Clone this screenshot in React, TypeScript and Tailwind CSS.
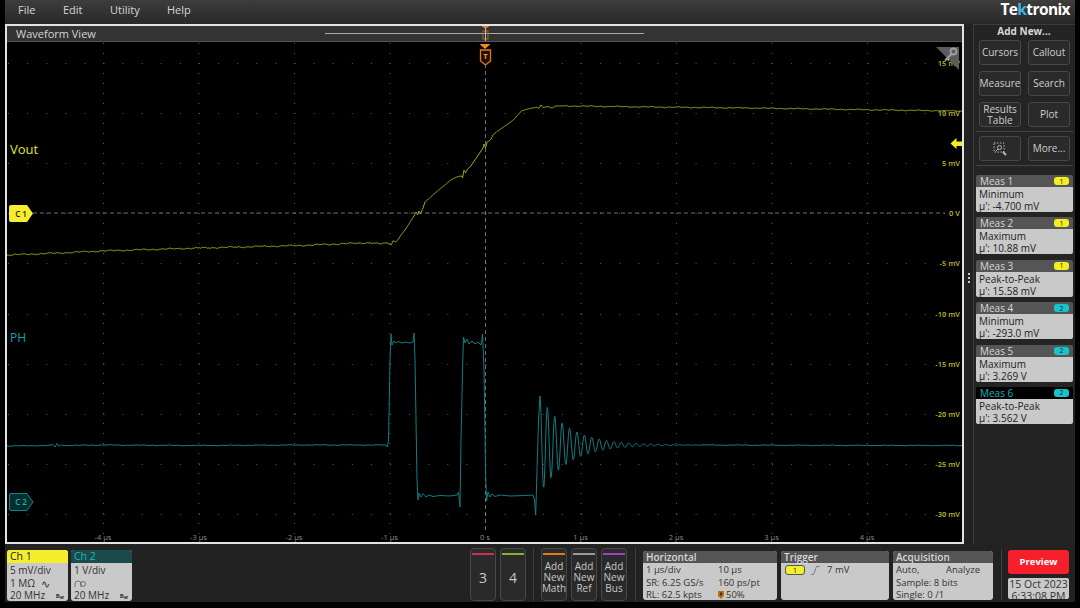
import React from "react";

const F = { fontFamily: '"Open Sans","Liberation Sans",sans-serif' };

function interp(pts: number[][], step = 0.7) {
  const out: number[][] = [];
  for (let i = 0; i < pts.length - 1; i++) {
    const [x0, y0] = pts[i];
    const [x1, y1] = pts[i + 1];
    const n = Math.max(1, Math.round((x1 - x0) / step));
    for (let k = 0; k < n; k++) out.push([x0 + ((x1 - x0) * k) / n, y0 + ((y1 - y0) * k) / n]);
  }
  out.push(pts[pts.length - 1]);
  return out;
}
const noise = (x: number, a: number) =>
  a * (Math.sin(x * 0.73) * 0.5 + Math.sin(x * 1.91 + 1.3) * 0.35 + Math.sin(x * 0.21 + 0.4) * 0.5);
const toPath = (p: number[][]) => "M" + p.map(([x, y]) => `${x.toFixed(1)} ${y.toFixed(1)}`).join("L");

const yellowPts = [
  [7, 255], [60, 253], [100, 251], [150, 249.5], [200, 248], [300, 245.5], [370, 242.7], [380, 244], [388, 243], [391, 244.5], [393, 241], [396, 241.5],
  [405, 230], [414, 216], [416, 212], [417.5, 215], [419, 211], [420.5, 214], [423, 208], [425, 202], [436.7, 191.7], [451.7, 179.3], [458, 176.5], [461.7, 176],
  [462.5, 178], [464, 170], [465.5, 173], [467.5, 169], [470, 167], [477, 157], [483, 148], [484, 144], [485.5, 148], [487, 142], [489, 141], [491, 139], [493, 135], [496.7, 131.7], [505, 126], [513.3, 120],
  [521.7, 110.7], [530, 108.5], [536.7, 107.3], [539, 108.5], [541, 105], [543, 107.5], [548, 106.5], [552, 108], [556, 106], [570, 106],
  [650, 107], [750, 108], [850, 109.5], [920, 110.5], [962, 111],
];
const yellowBase = interp(yellowPts).map(([x, y]) => [x, y + noise(x, x < 400 ? 0.7 : x > 560 ? 0.5 : 0)]);

const cyanPts = [
  [7, 446], [50, 445.5], [53, 444.5], [55, 447], [57, 443.5], [59, 446.5], [61, 444.5], [64, 445.5], [100, 445], [200, 445.5], [300, 445], [380, 445], [386, 445], [387.5, 447], [388.5, 440],
  [390, 360], [391, 334], [392, 345], [394, 341], [396, 343], [398, 341.5], [402, 343], [406, 342], [410, 343], [413, 342], [414, 333], [415, 360],
  [417, 480], [418, 500], [419, 493], [421, 497], [423, 493.5], [426, 497], [429, 495], [433, 496.5], [440, 495.5], [450, 496], [457, 495], [458.5, 492], [460, 507],
  [461, 440], [462.5, 370], [463.5, 337], [465, 343], [467, 339], [469, 344], [472, 341], [475, 344], [478, 342], [481, 345], [482.5, 334], [484, 370],
  [485.5, 470], [486.5, 501], [488, 492], [490, 497], [492, 494], [495, 496.5], [500, 495], [510, 496], [525, 495.5], [533, 495], [534.5, 500], [535.7, 515],
  [537, 470], [538.5, 420], [540, 396],
];
const ringing: number[][] = [];
for (let x = 540.4; x < 700; x += 0.5) {
  ringing.push([x, 445 - 49 * Math.exp(-(x - 540) / 28) * Math.cos((2 * Math.PI * (x - 540)) / 7.4)]);
}
const cyanTail = interp([[700, 445], [800, 445.3], [962, 445.5]], 1);
const cyanData = [
  ...interp(cyanPts, 1).map(([x, y]) => [x, y + (x < 380 ? noise(x, 0.35) : 0)]),
  ...ringing,
  ...cyanTail.map(([x, y]) => [x, y + noise(x, 0.35)]),
];

const xs = [103, 198.5, 294, 389.5, 485, 580.5, 676, 771.5, 867];
const ys = [63, 113, 163, 213, 263, 314, 364, 414, 464, 514];
const yLabels = ["15 mV", "10 mV", "5 mV", "0 V", "-5 mV", "-10 mV", "-15 mV", "-20 mV", "-25 mV", "-30 mV"];
const xLabels = ["-4 µs", "-3 µs", "-2 µs", "-1 µs", "0 s", "1 µs", "2 µs", "3 µs", "4 µs"];

function Plot() {
  const dots: React.ReactNode[] = [];
  for (const y of ys) {
    for (let x = 8; x < 962; x += 19.1) dots.push(<rect key={`h${y}-${x}`} x={x} y={y} width="1" height="1" fill="#5a5a5a" />);
  }
  for (const x of xs) {
    if (x === 485) continue;
    for (let y = 43; y < 542; y += 10) dots.push(<rect key={`v${x}-${y}`} x={x} y={y} width="1" height="1" fill="#5a5a5a" />);
  }
  return (
    <div className="relative h-[500px] bg-black overflow-hidden">
      <svg className="block" width="955" height="500" viewBox="7 42 955 500" style={F}>
        {dots}
        <line x1="33" y1="213" x2="945" y2="213" stroke="#8c8c8c" strokeWidth="0.8" strokeDasharray="4 3" />
        <line x1="485.500" y1="64" x2="485.500" y2="530" stroke="#8c8c8c" strokeWidth="0.8" strokeDasharray="4 3" />
        <path d={toPath(yellowBase)} fill="none" stroke="#a6a61a" strokeWidth="1" />
        <path d={toPath(cyanData)} fill="none" stroke="#0f7f85" strokeWidth="1" />
        {ys.map((y, i) => (
          <text key={y} x="960" y={y + 3} textAnchor="end" fontSize="7.5" fontWeight="600" fill="#bcbc26">{yLabels[i]}</text>
        ))}
        {xs.map((x, i) => (
          <text key={x} x={x} y="540" textAnchor="middle" fontSize="7.5" fill="#8e8e8e">{xLabels[i]}</text>
        ))}
        <text x="10" y="154" fontSize="13" fill="#e6e02c">Vout</text>
        <text x="10" y="342" fontSize="12" fill="#12a6ac">PH</text>
        <path d="M11 205h16l6 8.5-6 8.5H11a2 2 0 0 1-2-2V207a2 2 0 0 1 2-2z" fill="#f4ee2e" />
        <text x="21" y="216.500" textAnchor="middle" fontSize="8" fontWeight="600" fill="#222">C 1</text>
        <path d="M11 493.500h16l6 8.500-6 8.500H11a1.500 1.500 0 0 1-1.500-1.500V495a1.500 1.500 0 0 1 1.500-1.500z" fill="#072f30" stroke="#15a0a6" strokeWidth="0.8" />
        <text x="21" y="505" textAnchor="middle" fontSize="8" fontWeight="600" fill="#19b3b9">C 2</text>
        <path d="M936 47h23v23z" fill="#5c5c5c" />
        <g stroke="#a0a0a0" fill="none" strokeWidth="1.800">
          <circle cx="953.500" cy="51.500" r="3" />
          <path d="M951.500 54l-6.500 6.500M947 58.500l2 2" />
        </g>
        <path d="M950.500 143.500l6-5.500v3.500h5.500v4.500h-5.500v3z" fill="#f2ee20" />
        <path d="M479.500 44h11l-5.500 5z" fill="#f08a1e" />
        <path d="M480.500 50h10v11l-5 4-5-4z" fill="#1c0e02" stroke="#e07c16" strokeWidth="1.300" />
        <text x="485.500" y="59" textAnchor="middle" fontSize="7.500" fontWeight="700" fill="#f09a3a">T</text>
      </svg>
    </div>
  );
}

function Btn({ children, h, w = "w-[42px]" }: { children: React.ReactNode; h: string; w?: string }) {
  return (
    <div className={`${w} ${h} flex items-center justify-center text-center leading-[11px] text-[10px] text-[#cfcfcf] bg-[#2a2a2a] border border-[#474747] rounded-[3px]`}>
      {children}
    </div>
  );
}

function Meas({ n, kind, value, ch, active }: { n: number; kind: string; value: string; ch: 1 | 2; active?: boolean }) {
  return (
    <div className="w-[97px] h-[37px] rounded-[2px] overflow-hidden flex flex-col">
      <div className={`h-[13px] flex items-center justify-between px-[4px] ${active ? "bg-black" : "bg-[#555555]"}`}>
        <span className={`text-[10px] leading-[12px] ${active ? "text-[#12b5bb]" : "text-[#d8d8d8]"}`}>Meas {n}</span>
        <span className={`w-[15px] h-[8px] rounded-[3px] flex items-center justify-center text-[7px] leading-none text-[#222] ${ch === 1 ? "bg-[#f2ee20]" : "bg-[#16c4cb]"}`}>{ch}</span>
      </div>
      <div className="flex-1 bg-[#c9c9c9] px-[3px] text-[10px] leading-[12px] text-[#222] pt-px">
        <div>{kind}</div>
        <div>µ': {value}</div>
      </div>
    </div>
  );
}

function Chan({ title, l1, l2, wave, active }: { title: string; l1: string; l2: string; wave: React.ReactNode; active?: boolean }) {
  return (
    <div className="w-[61px] h-[51px] rounded-[3px] overflow-hidden flex flex-col bg-[#c9c9c9]">
      <div className={`h-[13px] px-[3px] text-[10.500px] leading-[13px] ${active ? "bg-[#f4ee2e] text-[#222]" : "bg-[#1b4a4a] text-[#16b9c0]"}`}>{title}</div>
      <div className="px-[3px] text-[10px] leading-[12.700px] text-[#333] pt-[1px]">
        <div>{l1}</div>
        <div className="flex items-center gap-[4px] h-[12.700px]">{l2 && <span>{l2}</span>}{wave}</div>
        <div className="flex items-center justify-between">
          <span>20 MHz</span>
          <span className="text-[6px] font-bold leading-none pr-[1px]">B<sub className="text-[5px]">w</sub></span>
        </div>
      </div>
    </div>
  );
}

function TallBtn({ bar, children, big }: { bar: string; children: React.ReactNode; big?: boolean }) {
  return (
    <div className={`w-[26px] h-[53px] shrink-0 flex flex-col items-center bg-[#2a2a2a] border border-[#474747] rounded-[4px] pt-[4px]`}>
      <div className={`w-[22px] h-[2px] ${bar}`} />
      <div className={`flex-1 flex items-center justify-center text-center text-[#c8c8c8] ${big ? "text-[14px]" : "text-[10px] leading-[11px]"}`}>{children}</div>
    </div>
  );
}

function Info({ title, w, children }: { title: string; w: string; children: React.ReactNode }) {
  return (
    <div className={`${w} h-[49px] shrink-0 rounded-[3px] overflow-hidden flex flex-col bg-[#c9c9c9]`}>
      <div className="h-[12px] bg-[#555555] px-[3px] text-[10px] font-semibold leading-[12px] text-[#d8d8d8]">{title}</div>
      <div className="flex-1 px-[3px] pt-px text-[9.500px] leading-[12.500px] text-[#333]">{children}</div>
    </div>
  );
}

export default function App() {
  return (
    <div className="w-[1080px] h-[608px] bg-black flex flex-col pl-[5px] pr-[5px] pb-[6px] overflow-hidden" style={F}>
      <header className="h-[24px] shrink-0 flex items-center justify-between bg-gradient-to-b from-[#3d3d3d] to-[#282828] pr-[5px]">
        <nav className="flex text-[11px] leading-[14px] text-[#d6d6d6] pl-[13px] pb-[4px]">
          <span className="w-[45px]">File</span>
          <span className="w-[47px]">Edit</span>
          <span className="w-[57px]">Utility</span>
          <span>Help</span>
        </nav>
        <span className="text-[15.500px] leading-[16px] font-bold text-white tracking-[-0.6px] pb-[6px]">Te<span className="text-[#3fb6e8]">k</span>tronix</span>
      </header>

      <main className="h-[520px] shrink-0 flex bg-[#222222]">
        <section className="w-[959px] shrink-0 border-2 border-[#e2e2e2] flex flex-col">
          <div className="h-[16px] shrink-0 bg-[#333333] border-b border-[#555] flex items-center pl-[9px] relative">
            <span className="text-[11px] leading-none text-[#d6d6d6]">Waveform View</span>
            <div className="absolute left-[318px] top-[7px] w-[319px] h-[1px] bg-[#a9a9a9]" />
            <svg className="absolute left-[473px] top-0" width="11" height="15" viewBox="0 0 11 15">
              <path d="M1.500 0h8l-4 3z" fill="#d9822b" />
              <rect x="3" y="5" width="5" height="8" fill="none" stroke="#a8662a" strokeWidth="1" />
              <line x1="5.500" y1="2" x2="5.500" y2="15" stroke="#bbb" strokeWidth="1" />
            </svg>
          </div>
          <Plot />
        </section>

        <div className="w-[9px] shrink-0 flex flex-col items-center justify-center gap-[2px] pb-[12px] pl-[1px]">
          <i className="w-[2px] h-[2px] bg-[#ccc]" />
          <i className="w-[2px] h-[2px] bg-[#ccc]" />
          <i className="w-[2px] h-[2px] bg-[#ccc]" />
        </div>

        <aside className="flex-1 border-l border-t border-[#3c3c3c] bg-[#242424] flex flex-col pl-[2px]">
          <div className="text-[10px] font-bold text-[#d8d8d8] text-center leading-[12px] h-[12px] pr-[3px]">Add New...</div>
          <div className="grid grid-cols-[42px_42px] gap-x-[7px] gap-y-[6px] pl-[3px] pt-[3px]">
            <Btn h="h-[25px]">Cursors</Btn>
            <Btn h="h-[25px]">Callout</Btn>
            <Btn h="h-[25px]">Measure</Btn>
            <Btn h="h-[25px]">Search</Btn>
            <Btn h="h-[25px]">Results<br />Table</Btn>
            <Btn h="h-[25px]">Plot</Btn>
          </div>
          <div className="h-px bg-[#444] mt-[4px] mr-[2px]" />
          <div className="grid grid-cols-[42px_42px] gap-x-[7px] pl-[3px] mt-[4px]">
            <Btn h="h-[25px]">
              <svg width="14" height="14" viewBox="0 0 14 14" fill="none" stroke="#b5b5b5" strokeWidth="1">
                <rect x="1" y="1" width="10" height="9" strokeDasharray="1.500 1.500" />
                <circle cx="6.500" cy="5.500" r="2" />
                <path d="M5 7l-2 2" />
                <path d="M10 10l3 3" strokeWidth="2" />
              </svg>
            </Btn>
            <Btn h="h-[25px]">More...</Btn>
          </div>
          <div className="h-px bg-[#444] mt-[4px] mr-[2px]" />
          <div className="flex flex-col gap-[5.400px] mt-[9px]">
            <Meas n={1} kind="Minimum" value="-4.700 mV" ch={1} />
            <Meas n={2} kind="Maximum" value="10.88 mV" ch={1} />
            <Meas n={3} kind="Peak-to-Peak" value="15.58 mV" ch={1} />
            <Meas n={4} kind="Minimum" value="-293.0 mV" ch={2} />
            <Meas n={5} kind="Maximum" value="3.269 V" ch={2} />
            <Meas n={6} kind="Peak-to-Peak" value="3.562 V" ch={2} active />
          </div>
        </aside>
      </main>

      <footer className="flex-1 flex items-start bg-[#222222] pl-[2px] pt-[6px]">
        <div className="flex gap-[3px]">
          <Chan title="Ch 1" l1="5 mV/div" l2="1 MΩ" active wave={<span className="text-[11px] leading-none pl-[2px]">∿</span>} />
          <Chan title="Ch 2" l1="1 V/div" l2="" wave={
            <svg width="12" height="9" viewBox="0 0 12 9" fill="none" stroke="#666" strokeWidth="0.900">
              <path d="M1 8V5a3 3 0 0 1 6 0v3" />
              <circle cx="9" cy="5" r="2.500" />
            </svg>
          } />
        </div>
        <div className="ml-[338px] -mt-[2px] flex items-start">
          <div className="flex gap-[4px]">
            <TallBtn bar="bg-[#c8324a]" big>3</TallBtn>
            <TallBtn bar="bg-[#7fb62c]" big>4</TallBtn>
          </div>
          <div className="w-px h-[53px] bg-[#3f3f3f] mx-[7px]" />
          <div className="flex gap-[4px]">
            <TallBtn bar="bg-[#e07c16]">Add<br />New<br />Math</TallBtn>
            <TallBtn bar="bg-[#9a9a9a]">Add<br />New<br />Ref</TallBtn>
            <TallBtn bar="bg-[#a040c8]">Add<br />New<br />Bus</TallBtn>
          </div>
          <div className="w-px h-[53px] bg-[#3f3f3f] mx-[7.500px]" />
        </div>
        <div className="flex gap-[4px] mt-px">
          <Info title="Horizontal" w="w-[134px]">
            <div className="grid grid-cols-[72px_1fr]">
              <span>1 µs/div</span><span>10 µs</span>
              <span>SR: 6.25 GS/s</span><span>160 ps/pt</span>
              <span>RL: 62.5 kpts</span>
              <span className="flex items-center gap-[2px]">
                <svg width="6" height="8" viewBox="0 0 6 8"><path d="M0 0h6v5l-3 3-3-3z" fill="#c8680c" /><rect x="2" y="1.500" width="2" height="3" fill="#333" /></svg>
                50%
              </span>
            </div>
          </Info>
          <Info title="Trigger" w="w-[108px]">
            <div className="flex items-center gap-[6px] pl-[1px]">
              <span className="w-[20px] h-[10px] bg-[#f4ee2e] border border-[#555] rounded-[3px] flex items-center justify-center text-[7px] leading-none text-[#222]">1</span>
              <svg width="9" height="9" viewBox="0 0 9 9" fill="none" stroke="#7a7a9a" strokeWidth="1"><path d="M0 8.500h2.500l3-8H9" /></svg>
              <span className="pl-[1px]">7 mV</span>
            </div>
          </Info>
          <Info title="Acquisition" w="w-[100px]">
            <div className="flex justify-between pr-[10px]"><span>Auto,</span><span>Analyze</span></div>
            <div>Sample: 8 bits</div>
            <div>Single: 0 /1</div>
          </Info>
        </div>
        <div className="w-px h-[51px] bg-[#3f3f3f] ml-[8px] -mt-[1px]" />
        <div className="ml-[6px] w-[61px] flex flex-col gap-[4px]">
          <div className="h-[24px] rounded-[3px] bg-[#f5202c] text-white text-[9.500px] font-bold flex items-center justify-center">Preview</div>
          <div className="h-[21px] rounded-[2px] overflow-hidden bg-[#c9c9c9] text-[10.500px] leading-[12px] text-[#333] text-center">15 Oct 2023<br />6:33:08 PM</div>
        </div>
      </footer>
    </div>
  );
}
